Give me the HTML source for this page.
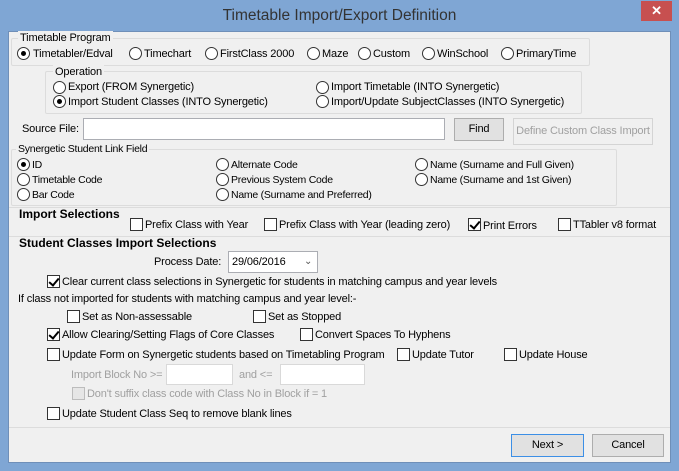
<!DOCTYPE html>
<html><head><meta charset="utf-8"><style>
*{margin:0;padding:0;box-sizing:border-box}
body{width:679px;height:471px;background:#7fa6d4;position:relative;overflow:hidden;font-family:"Liberation Sans",sans-serif;font-size:11px;letter-spacing:-0.15px;color:#000}
.a{position:absolute;white-space:nowrap;line-height:14px}
.body{position:absolute;left:8px;top:31px;width:663px;height:432px;background:#f0f0f0;border:1px solid #6f8fb8}
.g{position:absolute;border:1px solid #dcdcdc;border-radius:2px}
.r{position:absolute;width:13px;height:13px;border:1px solid #333;border-radius:50%;background:#fff}
.r.on::after{content:"";position:absolute;left:3px;top:3px;width:5px;height:5px;border-radius:50%;background:#000}
.c{position:absolute;width:13px;height:13px;border:1px solid #333;background:#fff}
.c.on::after{content:"";position:absolute;left:3px;top:0px;width:4px;height:8px;border:solid #000;border-width:0 2px 2px 0;transform:rotate(40deg)}
.c.dis{border-color:#bcbcbc;background:#e6e6e6}
.in{position:absolute;background:#fff;border:1px solid #abadb3}
.btn{position:absolute;background:#e1e1e1;border:1px solid #adadad;text-align:center;line-height:20px;white-space:nowrap}
.sep{position:absolute;left:9px;width:661px;height:1px;background:#dcdcdc}
.b{font-weight:bold;font-size:12px;letter-spacing:0}
.gr{color:#a0a0a0}
.n{font-size:10.5px;letter-spacing:-0.25px}
</style></head><body>
<div class="a" style="left:0;width:679px;top:7px;text-align:center;font-size:15.5px;letter-spacing:0;color:#333;line-height:18px">Timetable Import/Export Definition</div>
<div style="position:absolute;left:641px;top:1px;width:31px;height:20px;background:#c75050;color:#fff;text-align:center;font-size:13px;line-height:20px;font-weight:bold">✕</div>
<div class="body"></div>

<div class="g" style="left:11px;top:38px;width:579px;height:28px"></div>
<div class="a" style="left:18px;top:31px;background:#f0f0f0;padding:0 2px">Timetable Program</div>
<div class="r on" style="left:17px;top:47px"></div><div class="a" style="left:33px;top:47px">Timetabler/Edval</div>
<div class="r" style="left:129px;top:47px"></div><div class="a" style="left:144px;top:47px">Timechart</div>
<div class="r" style="left:205px;top:47px"></div><div class="a" style="left:220px;top:47px">FirstClass 2000</div>
<div class="r" style="left:307px;top:47px"></div><div class="a" style="left:322px;top:47px">Maze</div>
<div class="r" style="left:358px;top:47px"></div><div class="a" style="left:373px;top:47px">Custom</div>
<div class="r" style="left:422px;top:47px"></div><div class="a" style="left:437px;top:47px">WinSchool</div>
<div class="r" style="left:501px;top:47px"></div><div class="a" style="left:516px;top:47px">PrimaryTime</div>

<div class="g" style="left:45px;top:71px;width:537px;height:43px"></div>
<div class="a" style="left:53px;top:65px;background:#f0f0f0;padding:0 2px">Operation</div>
<div class="r" style="left:53px;top:81px"></div><div class="a" style="left:68px;top:80px">Export (FROM Synergetic)</div>
<div class="r on" style="left:53px;top:95px"></div><div class="a" style="left:68px;top:95px">Import Student Classes (INTO Synergetic)</div>
<div class="r" style="left:316px;top:81px"></div><div class="a" style="left:331px;top:80px">Import Timetable (INTO Synergetic)</div>
<div class="r" style="left:316px;top:95px"></div><div class="a" style="left:331px;top:95px">Import/Update SubjectClasses (INTO Synergetic)</div>

<div class="a" style="left:22px;top:122px">Source File:</div>
<div class="in" style="left:83px;top:118px;width:362px;height:22px"></div>
<div class="btn" style="left:454px;top:118px;width:50px;height:23px">Find</div>
<div class="btn gr" style="left:513px;top:118px;width:140px;height:27px;line-height:25px;background:#f0f0f0;border-color:#d4d4d4">Define Custom Class Import</div>

<div class="g" style="left:11px;top:149px;width:606px;height:57px"></div>
<div class="a n" style="left:16px;top:142px;background:#f0f0f0;padding:0 2px">Synergetic Student Link Field</div>
<div class="r on" style="left:17px;top:158px"></div><div class="a n" style="left:32px;top:158px">ID</div>
<div class="r" style="left:17px;top:173px"></div><div class="a n" style="left:32px;top:173px">Timetable Code</div>
<div class="r" style="left:17px;top:188px"></div><div class="a n" style="left:32px;top:188px">Bar Code</div>
<div class="r" style="left:216px;top:158px"></div><div class="a n" style="left:231px;top:158px">Alternate Code</div>
<div class="r" style="left:216px;top:173px"></div><div class="a n" style="left:231px;top:173px">Previous System Code</div>
<div class="r" style="left:216px;top:188px"></div><div class="a n" style="left:231px;top:188px">Name (Surname and Preferred)</div>
<div class="r" style="left:415px;top:158px"></div><div class="a n" style="left:430px;top:158px">Name (Surname and Full Given)</div>
<div class="r" style="left:415px;top:173px"></div><div class="a n" style="left:430px;top:173px">Name (Surname and 1st Given)</div>

<div class="sep" style="top:207px"></div>
<div class="a b" style="left:19px;top:207px">Import Selections</div>
<div class="c" style="left:130px;top:218px"></div><div class="a" style="left:145px;top:218px">Prefix Class with Year</div>
<div class="c" style="left:264px;top:218px"></div><div class="a" style="left:279px;top:218px">Prefix Class with Year (leading zero)</div>
<div class="c on" style="left:468px;top:218px"></div><div class="a" style="left:483px;top:219px">Print Errors</div>
<div class="c" style="left:558px;top:218px"></div><div class="a" style="left:573px;top:218px">TTabler v8 format</div>

<div class="sep" style="top:236px"></div>
<div class="a b" style="left:19px;top:236px">Student Classes Import Selections</div>
<div class="a" style="left:154px;top:255px">Process Date:</div>
<div class="in" style="left:228px;top:251px;width:90px;height:22px"></div>
<div class="a" style="left:232px;top:255px">29/06/2016</div>
<div class="a" style="left:304px;top:255px;font-size:10px;color:#555">⌄</div>
<div class="c on" style="left:47px;top:275px"></div><div class="a" style="left:62px;top:275px">Clear current class selections in Synergetic for students in matching campus and year levels</div>
<div class="a" style="left:18px;top:292px">If class not imported for students with matching campus and year level:-</div>
<div class="c" style="left:67px;top:310px"></div><div class="a" style="left:82px;top:310px">Set as Non-assessable</div>
<div class="c" style="left:253px;top:310px"></div><div class="a" style="left:268px;top:310px">Set as Stopped</div>
<div class="c on" style="left:47px;top:328px"></div><div class="a" style="left:62px;top:328px">Allow Clearing/Setting Flags of Core Classes</div>
<div class="c" style="left:300px;top:328px"></div><div class="a" style="left:315px;top:328px">Convert Spaces To Hyphens</div>
<div class="c" style="left:47px;top:348px"></div><div class="a" style="left:62px;top:348px">Update Form on Synergetic students based on Timetabling Program</div>
<div class="c" style="left:397px;top:348px"></div><div class="a" style="left:412px;top:348px">Update Tutor</div>
<div class="c" style="left:504px;top:348px"></div><div class="a" style="left:519px;top:348px">Update House</div>
<div class="a gr" style="left:71px;top:368px">Import Block No &gt;=</div>
<div class="in" style="left:166px;top:364px;width:67px;height:21px;border-color:#d9d9d9"></div>
<div class="a gr" style="left:239px;top:368px">and &lt;=</div>
<div class="in" style="left:280px;top:364px;width:85px;height:21px;border-color:#d9d9d9"></div>
<div class="c dis" style="left:72px;top:387px"></div><div class="a gr" style="left:87px;top:387px">Don't suffix class code with Class No in Block if = 1</div>
<div class="c" style="left:47px;top:407px"></div><div class="a" style="left:62px;top:407px">Update Student Class Seq to remove blank lines</div>

<div class="sep" style="top:427px"></div>
<div class="btn" style="left:511px;top:434px;width:73px;height:23px;border-color:#3c8fe6">Next &gt;</div>
<div class="btn" style="left:592px;top:434px;width:72px;height:23px">Cancel</div>
</body></html>
